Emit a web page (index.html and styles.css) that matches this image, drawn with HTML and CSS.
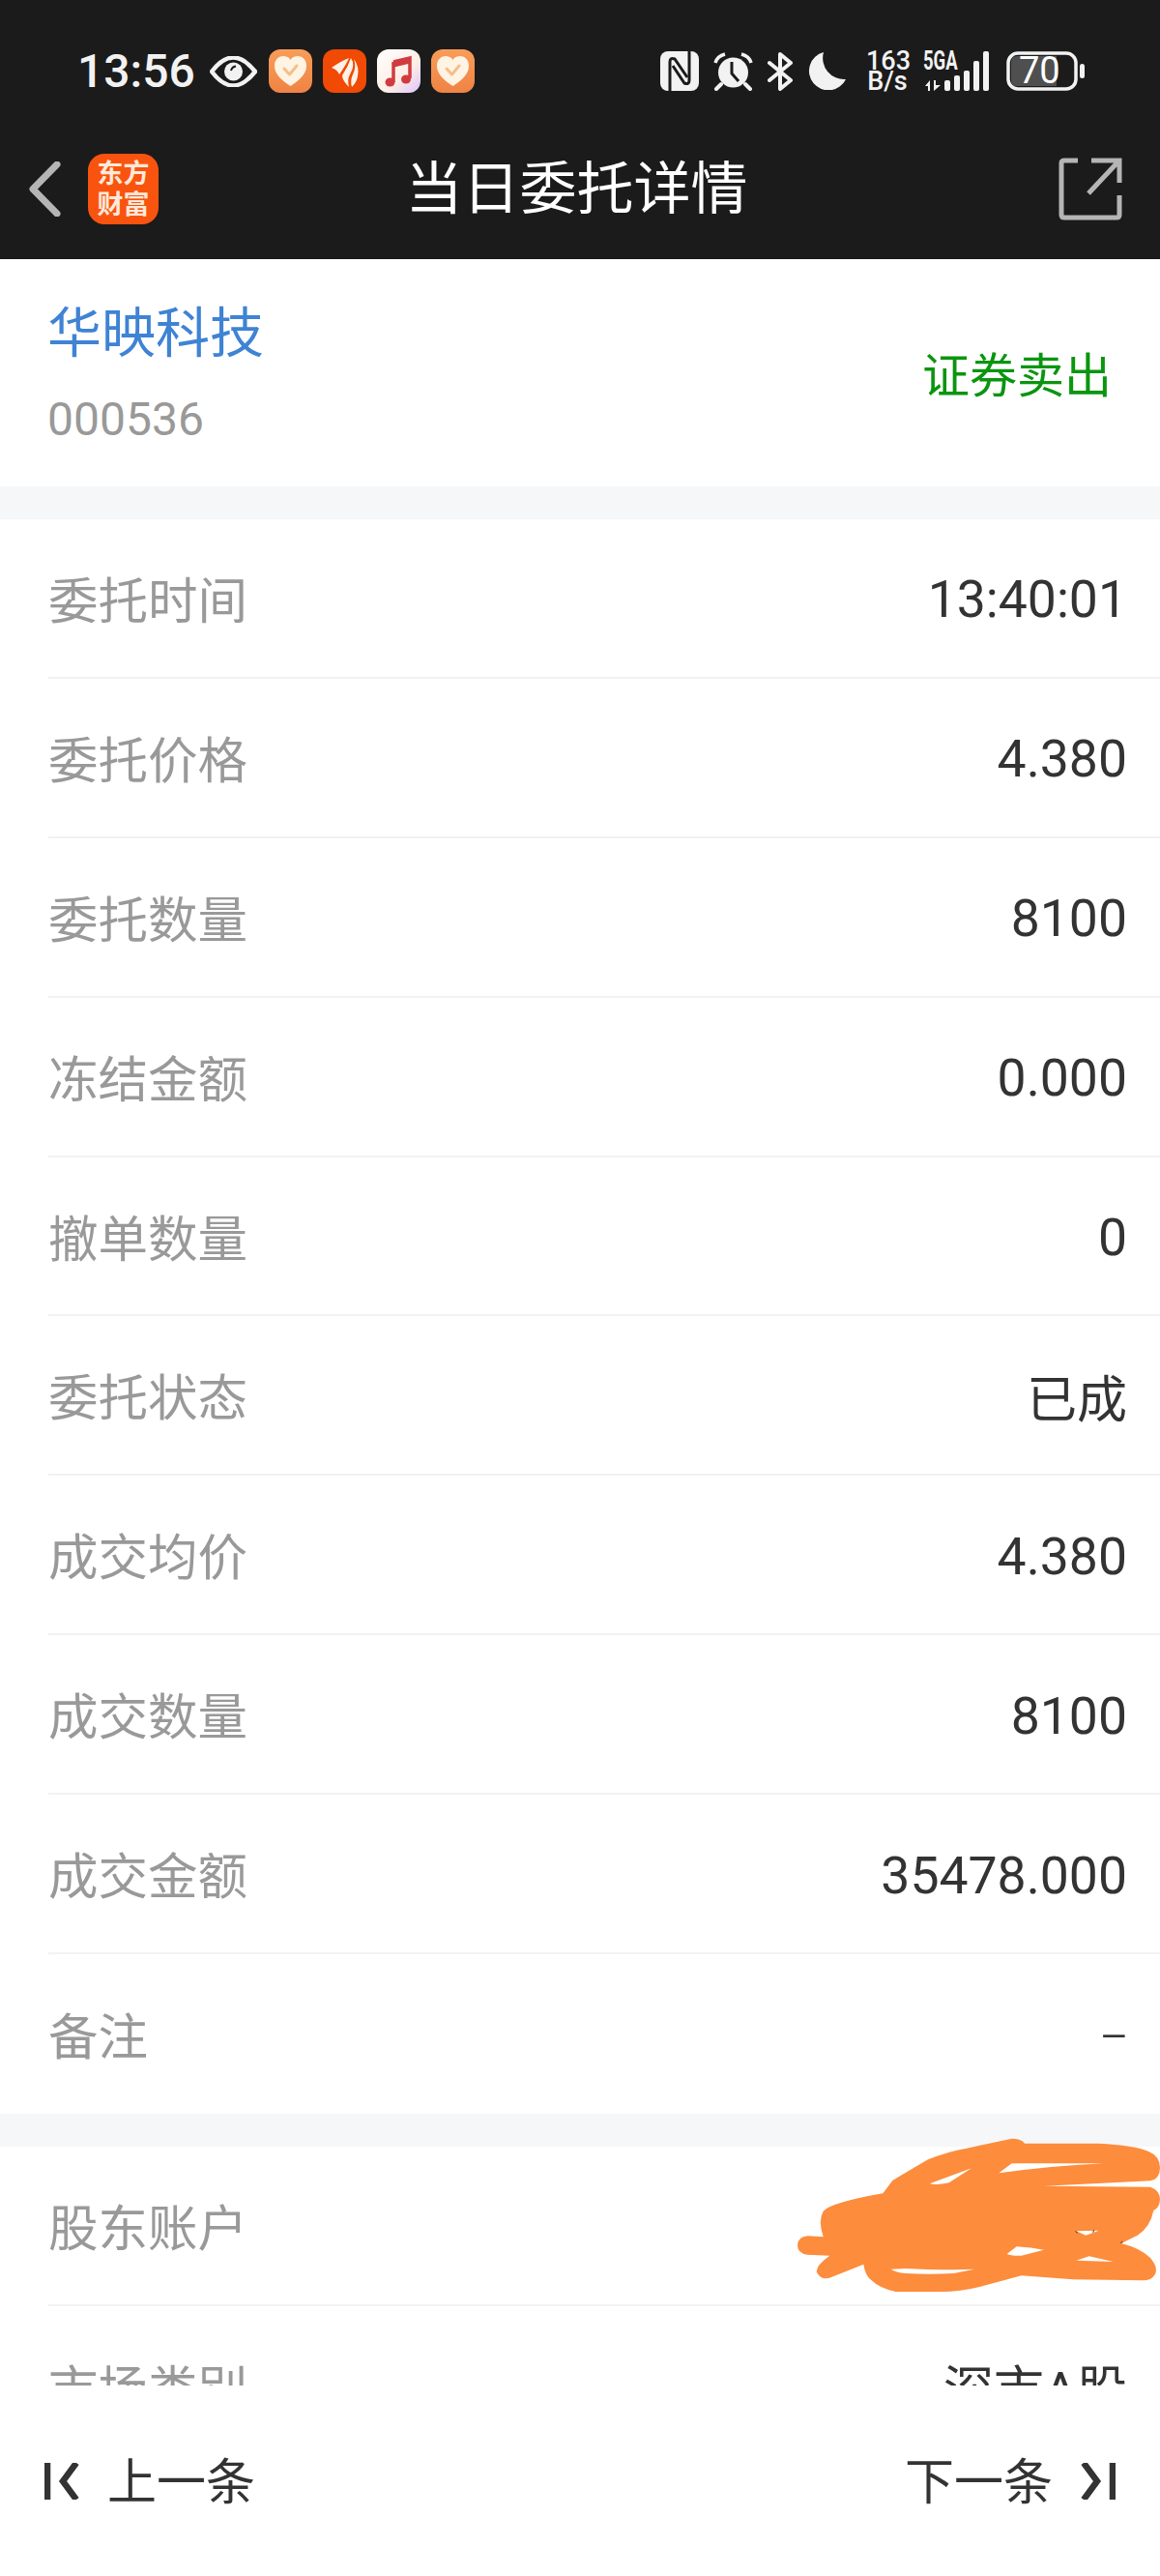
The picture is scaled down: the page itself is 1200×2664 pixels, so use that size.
FILE: index.html
```html
<!DOCTYPE html>
<html lang="zh-CN">

<head>
  <meta charset="UTF-8">
  <meta name="viewport" content="width=device-width, initial-scale=1.0">
  <title>当日委托详情</title>
  <link rel="stylesheet" href="styles.css">
</head>

<body>
  <div class="page">
    <header class="top">
      <!-- 状态栏 -->
      <div class="status">
        <div class="status-left">
          <span class="clock">13:56</span>
          <svg class="eye" width="49" height="32" viewBox="0 0 49 32">
            <path d="M2 16Q24 -13 47 16Q24 45 2 16Z" fill="none" stroke="#f2f2f2" stroke-width="4.5" stroke-linejoin="round" />
            <circle cx="24.500" cy="16" r="9.500" fill="#f2f2f2" />
            <path d="M22 15Q23 11 27 10.500" fill="none" stroke="#1b1b1b" stroke-width="2" />
          </svg>
          <svg class="app-icon" width="45" height="45" viewBox="0 0 45 45">
            <defs>
              <linearGradient id="peach" x1="0" y1="0" x2="0" y2="1">
                <stop offset="0" stop-color="#f89d58" />
                <stop offset="1" stop-color="#ef8344" />
              </linearGradient>
              <linearGradient id="music" x1="0" y1="0" x2="1" y2="1">
                <stop offset="0" stop-color="#ffffff" />
                <stop offset="0.6" stop-color="#fdeee6" />
                <stop offset="1" stop-color="#dcc4fa" />
              </linearGradient>
            </defs>
            <rect width="45" height="45" rx="12" fill="url(#peach)" />
            <path d="M22.500 38C12 31 6 25 6 17C6 10 11 7 15 7C18 7 21 8 22.500 11C24 8 27 7 30 7C34 7 39 10 39 17C39 25 33 31 22.500 38Z" fill="#fff3e4" />
            <path d="M16 20L21.500 26L29 17" fill="none" stroke="#f3c088" stroke-width="3" stroke-linecap="round" stroke-linejoin="round" />
          </svg>
          <svg class="app-icon" width="45" height="45" viewBox="0 0 45 45">
            <rect width="45" height="45" rx="12" fill="#f04a05" />
            <path d="M9 19Q19 12 27 9Q24 16 17 26Q15 21 9 19Z" fill="#fff1e6" />
            <path d="M29 9Q34 16 28 26Q25 31 27 39Q20 32 20 27Q26 18 29 9Z" fill="#fff1e6" />
            <path d="M32 10Q38 18 36 28Q35 34 30 39Q28 32 31 26Q35 18 32 10Z" fill="#fff1e6" />
          </svg>
          <svg class="app-icon" width="45" height="45" viewBox="0 0 45 45">
            <rect width="45" height="45" rx="12" fill="url(#music)" />
            <path d="M17 13L34 9V30" fill="none" stroke="#d13b3f" stroke-width="3.500" />
            <path d="M17 13V34" fill="none" stroke="#d13b3f" stroke-width="3.500" />
            <path d="M17 16L34 12" fill="none" stroke="#d13b3f" stroke-width="5" />
            <ellipse cx="13.500" cy="34" rx="5" ry="4.500" fill="#d13b3f" />
            <ellipse cx="30" cy="31" rx="5" ry="4.500" fill="#d13b3f" />
          </svg>
          <svg class="app-icon" width="45" height="45" viewBox="0 0 45 45">
            <rect width="45" height="45" rx="12" fill="url(#peach)" />
            <path d="M22.500 38C12 31 6 25 6 17C6 10 11 7 15 7C18 7 21 8 22.500 11C24 8 27 7 30 7C34 7 39 10 39 17C39 25 33 31 22.500 38Z" fill="#fff3e4" />
            <path d="M16 20L21.500 26L29 17" fill="none" stroke="#f3c088" stroke-width="3" stroke-linecap="round" stroke-linejoin="round" />
          </svg>
        </div>
        <div class="status-right">
          <svg class="nfc" width="40" height="41" viewBox="0 0 40 41">
            <rect width="40" height="41" rx="8" fill="#f2f2f2" />
            <path d="M10 41V11Q10 6 15 8L28 27" fill="none" stroke="#1b1b1b" stroke-width="3" />
            <path d="M30 0V30Q30 35 25 33L13 15" fill="none" stroke="#1b1b1b" stroke-width="3" />
          </svg>
          <svg class="alarm" width="41" height="40" viewBox="0 0 41 40">
            <circle cx="20.500" cy="21" r="15.500" fill="#f2f2f2" />
            <path d="M2 11Q4 4 12 2M39 11Q37 4 29 2" fill="none" stroke="#f2f2f2" stroke-width="3.500" />
            <path d="M8 33L3 38M33 33L38 38" fill="none" stroke="#f2f2f2" stroke-width="4" stroke-linecap="round" />
            <path d="M19 10V22L26 30" fill="none" stroke="#1b1b1b" stroke-width="3" />
          </svg>
          <svg class="bt" width="27" height="40" viewBox="0 0 27 40">
            <path d="M2 11L24 29L13 38V2L24 11L2 29" fill="none" stroke="#f2f2f2" stroke-width="4" stroke-linejoin="round" stroke-linecap="round" />
          </svg>
          <svg class="moon" width="39" height="39" viewBox="0 0 39 39">
            <path d="M16 0A20 20 0 1 0 39 28A22 22 0 0 1 16 0Z" fill="#f2f2f2" />
          </svg>
          <div class="speed">
            <span>163</span>
            <span>B/s</span>
          </div>
          <div class="signal">
            <span class="net">5GA</span>
            <svg width="68" height="41" viewBox="0 0 68 41">
              <path d="M2 36L7 30V41H5V36ZM11 30H13V35H18L11 41Z" fill="#f2f2f2" />
              <rect x="22" y="30" width="6" height="11" rx="2" fill="#f2f2f2" />
              <rect x="32" y="25" width="6" height="16" rx="2" fill="#f2f2f2" />
              <rect x="42" y="20" width="6" height="21" rx="2" fill="#f2f2f2" />
              <rect x="52" y="10" width="6" height="31" rx="2" fill="#f2f2f2" />
              <rect x="62" y="0" width="6" height="41" rx="2" fill="#f2f2f2" />
            </svg>
          </div>
          <div class="battery">
            <svg width="81" height="41" viewBox="0 0 81 41">
              <path d="M11 5H52V36H11Q5 36 5 30V11Q5 5 11 5Z" fill="#4f4f4f" />
              <rect x="2" y="2" width="70" height="37" rx="10" fill="none" stroke="#f2f2f2" stroke-width="3.500" />
              <rect x="76" y="13" width="5" height="15" rx="2.500" fill="#f2f2f2" />
            </svg>
            <span class="level">70</span>
          </div>
        </div>
      </div>
      <!-- 标题栏 -->
      <nav class="nav">
        <div class="nav-left">
          <svg width="33" height="57" viewBox="0 0 33 57">
            <path d="M29 3L4 28.500L29 54" fill="none" stroke="#b5b5b5" stroke-width="7" stroke-linecap="round" stroke-linejoin="round" />
          </svg>
          <div class="logo">东方<br>财富</div>
        </div>
        <h1 class="title">当日委托详情</h1>
        <svg class="share" width="66" height="65" viewBox="0 0 66 65">
          <path d="M20 3H6Q3 3 3 6V59Q3 62 6 62H60Q63 62 63 59V39" fill="none" stroke="#b5b5b5" stroke-width="5" />
          <path d="M31 37L62 4M34 3H63V26" fill="none" stroke="#b5b5b5" stroke-width="5" />
        </svg>
      </nav>
    </header>

    <main class="content">
      <section class="stock">
        <div>
          <p class="stock-name">华映科技</p>
          <p class="stock-code">000536</p>
        </div>
        <span class="trade">证券卖出</span>
      </section>

      <section class="group">
        <div class="row"><span class="label">委托时间</span><span class="value">13:40:01</span></div>
        <div class="row"><span class="label">委托价格</span><span class="value">4.380</span></div>
        <div class="row"><span class="label">委托数量</span><span class="value">8100</span></div>
        <div class="row"><span class="label">冻结金额</span><span class="value">0.000</span></div>
        <div class="row"><span class="label">撤单数量</span><span class="value">0</span></div>
        <div class="row"><span class="label">委托状态</span><span class="value cn">已成</span></div>
        <div class="row"><span class="label">成交均价</span><span class="value">4.380</span></div>
        <div class="row"><span class="label">成交数量</span><span class="value">8100</span></div>
        <div class="row"><span class="label">成交金额</span><span class="value">35478.000</span></div>
        <div class="row last"><span class="label">备注</span><span class="value dash">-</span></div>
      </section>

      <section class="group">
        <div class="row"><span class="label">股东账户</span></div>
        <div class="row last"><span class="label">市场类别</span><span class="value cn">深市A股</span></div>
      </section>
    </main>

    <footer class="pager">
      <div class="pager-btn">
        <svg width="36" height="38" viewBox="0 0 36 38">
          <path d="M3 0V38M33 0L19 19L33 38" fill="none" stroke="#333" stroke-width="6.500" />
        </svg>
        <span>上一条</span>
      </div>
      <div class="pager-btn">
        <span>下一条</span>
        <svg width="36" height="38" viewBox="0 0 36 38">
          <path d="M33 0V38M3 0L17 19L3 38" fill="none" stroke="#333" stroke-width="6.500" />
        </svg>
      </div>
    </footer>

    <!-- 账户号码上的涂抹 -->
    <svg class="scribble" width="440" height="340" viewBox="0 0 1320 1020">
      <path fill="#fd8c3c" fill-rule="evenodd" d="M195 515Q198 488 228 487L275 490Q258 440 275 410Q300 383 460 355L490 315Q540 285 600 250Q660 225 720 215L860 185Q890 185 900 200H1130Q1240 205 1285 225Q1320 240 1320 275Q1320 310 1290 316L960 332L1290 335Q1320 345 1320 375Q1318 400 1300 408Q1290 460 1250 485L1200 510Q1260 525 1290 555Q1315 585 1305 605Q1295 625 1265 625L1050 622L890 610L760 645Q700 660 640 660H500Q450 650 425 625Q405 610 400 575L300 615Q270 628 255 600Q250 580 295 548L225 545Q195 540 195 515Z
        M605 325L735 277L665 322Q630 330 605 325Z
        M820 292L860 262H1145Q1000 268 820 292Z
        M845 543L875 520Q920 522 960 530L890 548Q860 550 845 543Z
        M1060 563L1100 550L1175 567Z
        M485 590L530 588Q600 592 680 592L745 590L680 603Q600 608 530 603Q500 600 485 590Z
        M1060 472L1130 470L1090 485Z" />
      <path d="M1058 472L1064 478M1115 469L1112 476M1198 508L1204 505" stroke="#222" stroke-width="3" fill="none" />
    </svg>
  </div>
</body>

</html>
```

FILE: styles.css
```css
* {
  box-sizing: border-box;
}

html,
body {
  margin: 0;
  padding: 0;
}

body {
  background: #fff;
  font-family: Roboto, "Noto Sans CJK SC", sans-serif;
}

svg {
  display: block;
  flex-shrink: 0;
}

.page {
  position: relative;
  width: 1200px;
  height: 2664px;
  display: flex;
  flex-direction: column;
  overflow: hidden;
}

/* 顶部深色区 */
.top {
  height: 268px;
  background: #1b1b1b;
}

.status {
  height: 122px;
  padding: 25px 78px 0 80px;
  display: flex;
  align-items: center;
  justify-content: space-between;
}

.status-left,
.status-right {
  display: flex;
  align-items: center;
}

.clock {
  color: #f2f2f2;
  font-size: 48px;
  font-weight: 500;
  line-height: 45px;
  width: 121px;
  margin-right: 16px;
}

.eye {
  margin-right: 1px;
}

.app-icon {
  margin-left: 11px;
}

.nfc,
.alarm,
.bt {
  margin-right: 15px;
}

.moon {
  margin-right: 21px;
}

.speed {
  width: 44px;
  margin-right: 15px;
  color: #f2f2f2;
  font-size: 27px;
  font-weight: 500;
  line-height: 21px;
  text-align: center;
}

.speed span {
  display: block;
}

.signal {
  position: relative;
  width: 68px;
  height: 41px;
  margin-right: 18px;
}

.net {
  position: absolute;
  left: 0;
  top: -1px;
  color: #f2f2f2;
  font-size: 28px;
  font-weight: 700;
  line-height: 22px;
  white-space: nowrap;
  transform: scaleX(0.66);
  transform-origin: left top;
}

.battery {
  position: relative;
  width: 81px;
  height: 41px;
}

.level {
  position: absolute;
  left: 13px;
  top: 2px;
  color: #fff;
  font-size: 38px;
  line-height: 37px;
}

.nav {
  height: 146px;
  padding: 0 37px 0 30px;
  display: grid;
  grid-template-columns: 1fr auto 1fr;
  align-items: center;
}

.nav-left {
  display: flex;
  align-items: center;
  gap: 28px;
}

.logo {
  width: 73px;
  height: 73px;
  border-radius: 17px;
  background: #f9540f;
  color: #ffe9da;
  font-size: 27px;
  font-weight: 700;
  line-height: 32px;
  text-align: center;
  padding-top: 5px;
}

.title {
  margin: 2px 0 0;
  color: #fff;
  font-size: 59px;
  font-weight: 400;
  line-height: 70px;
}

.share {
  justify-self: end;
  margin-right: 2px;
}

/* 内容区 */
.content {
  flex: 1;
  min-height: 0;
  overflow: hidden;
  background: #f6f7f9;
}

.stock {
  height: 235px;
  padding: 0 50px 0 49px;
  background: #fff;
  display: flex;
  align-items: center;
  justify-content: space-between;
}

.stock p {
  margin: 0;
}

.stock-name {
  color: #3f83d4;
  font-size: 56px;
  line-height: 70px;
}

.stock-code {
  margin-top: 26px !important;
  color: #999;
  font-size: 48px;
  line-height: 56px;
}

.trade {
  color: #0a950f;
  font-size: 49px;
  margin: 0 0 3px 0;
}

.group {
  margin-top: 34px;
  background: #fff;
}

.row {
  height: 164.900px;
  margin-left: 50px;
  padding-right: 34px;
  border-bottom: 2px solid #f1f2f4;
  display: flex;
  align-items: center;
  justify-content: space-between;
}

.row.last {
  border-bottom: none;
}

.label {
  color: #999;
  font-size: 51.500px;
  margin-bottom: 2px;
}

.value {
  color: #333;
  font-size: 53.500px;
  margin-top: 3px;
}

.value.cn {
  font-size: 52px;
  margin-top: 1px;
}

/* 备注的短横线较长较细 */
.dash {
  display: inline-block;
  font-weight: 300;
  transform: scaleX(1.8);
  transform-origin: right center;
}

/* 底部翻页 */
.pager {
  height: 197px;
  padding: 0 46px;
  background: #fff;
  display: flex;
  align-items: center;
  justify-content: space-between;
}

.pager-btn {
  display: flex;
  align-items: center;
  gap: 29px;
  color: #333;
  font-size: 51px;
}

.pager-btn span {
  margin-bottom: 6px;
}

.scribble {
  position: absolute;
  left: 760px;
  top: 2150px;
}
```
